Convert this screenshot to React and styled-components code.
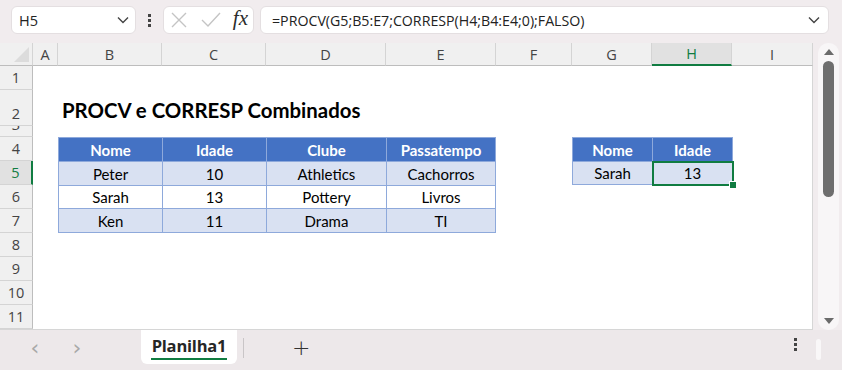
import React from 'react'
import styled, { createGlobalStyle } from 'styled-components'

const GlobalStyle = createGlobalStyle`
    html, body {
        margin: 0;
        padding: 0;
        background: #f1ecee;
    }
    * {
        box-sizing: border-box;
    }
`;

const COLS = ['A', 'B', 'C', 'D', 'E', 'F', 'G', 'H', 'I'];
const ROW_HEIGHTS = [24, 36, 11, 24, 24, 24, 24, 24, 24, 24, 24];

const people = [
    ['Peter', '10', 'Athletics', 'Cachorros'],
    ['Sarah', '13', 'Pottery', 'Livros'],
    ['Ken', '11', 'Drama', 'TI'],
];

const Chevron = () => (
    <svg width="12" height="8" viewBox="0 0 12 8">
        <polyline points="1,1.5 6,6.5 11,1.5" fill="none" stroke="#444" strokeWidth="1.4" />
    </svg>
);

export default function App() {
    return (
        <Window>
            <GlobalStyle />
            <Toolbar>
                <NameBox>
                    <span>H5</span>
                    <Chevron />
                </NameBox>
                <Dots>
                    <i /><i /><i />
                </Dots>
                <FxBox>
                    <svg width="20" height="20" viewBox="0 0 20 20">
                        <path d="M3 3 L17 17 M17 3 L3 17" stroke="#c4c4c4" strokeWidth="1.4" />
                    </svg>
                    <svg width="22" height="20" viewBox="0 0 22 20">
                        <polyline points="2,10 8,16 20,3" fill="none" stroke="#c4c4c4" strokeWidth="1.4" />
                    </svg>
                    <Fx>fx</Fx>
                </FxBox>
                <FormulaBox>
                    <span>=PROCV(G5;B5:E7;CORRESP(H4;B4:E4;0);FALSO)</span>
                    <Chevron />
                </FormulaBox>
            </Toolbar>

            <Middle>
                <Sheet>
                    <Corner />
                    {COLS.map((c) => (
                        <ColHead key={c} $active={c === 'H'}>{c}</ColHead>
                    ))}
                    {ROW_HEIGHTS.map((h, i) => (
                        <RowHead key={i} $row={i + 2} $active={i + 1 === 5}>
                            {i + 1}
                        </RowHead>
                    ))}

                    <Title>PROCV e CORRESP Combinados</Title>

                    <Table $col="3 / 7" $row="5 / 9" $cols="103px 103px 119px 108px">
                        {['Nome', 'Idade', 'Clube', 'Passatempo'].map((t) => (
                            <Cell key={t} $head>{t}</Cell>
                        ))}
                        {people.map((p, r) =>
                            p.map((v, c) => (
                                <Cell key={r + '-' + c} $band={r % 2 === 0}>{v}</Cell>
                            ))
                        )}
                    </Table>

                    <Table $col="8 / 10" $row="5 / 7" $cols="79px 79px">
                        <Cell $head>Nome</Cell>
                        <Cell $head>Idade</Cell>
                        <Cell $band>Sarah</Cell>
                        <Cell $band $selected>13</Cell>
                    </Table>
                </Sheet>

                <ScrollTrack>
                    <Arrow $up />
                    <Thumb />
                    <Spacer />
                    <Arrow />
                </ScrollTrack>
            </Middle>

            <TabBar>
                <NavArea>
                    <NavArrow>&#x2039;</NavArrow>
                    <NavArrow>&#x203A;</NavArrow>
                </NavArea>
                <SheetTab>Planilha1</SheetTab>
                <TabDivider />
                <AddSheet>+</AddSheet>
                <BarFill />
                <Dots>
                    <i /><i /><i />
                </Dots>
                <SplitPill />
            </TabBar>
        </Window>
    );
}

const Window = styled.div`
    width: 842px;
    height: 370px;
    overflow: hidden;
    background: #f1ecee;
    display: flex;
    flex-direction: column;
    font-family: "Open Sans", "Noto Sans", sans-serif;
`;

const Toolbar = styled.div`
    height: 43px;
    display: flex;
    align-items: flex-start;
    padding: 6px 13px 0 11px;
`;

const Box = styled.div`
    height: 28px;
    background: #ffffff;
    border: 1px solid #e4dfe1;
    border-radius: 6px;
    display: flex;
    align-items: center;
`;

const NameBox = styled(Box)`
    width: 125px;
    padding: 0 6px 0 7px;
    justify-content: space-between;
    font-size: 14.5px;
    color: #222;
`;

const Dots = styled.div`
    width: 27px;
    height: 28px;
    display: flex;
    flex-direction: column;
    align-items: center;
    justify-content: center;
    gap: 2px;
    i {
        display: block;
        width: 3px;
        height: 3px;
        background: #444;
    }
`;

const FxBox = styled(Box)`
    width: 91px;
    padding: 0 5px 0 5px;
    justify-content: space-between;
`;

const Fx = styled.span`
    font-family: "Liberation Serif", "DejaVu Serif", serif;
    font-style: italic;
    font-size: 21px;
    color: #2b2b2b;
    margin-top: -4px;
`;

const FormulaBox = styled(Box)`
    flex: 1;
    margin-left: 6px;
    padding: 0 8px 0 11px;
    justify-content: space-between;
    font-size: 14.2px;
    color: #222;
`;

const Middle = styled.div`
    display: flex;
    height: 287px;
`;

const Sheet = styled.div`
    width: 813px;
    background: #ffffff;
    display: grid;
    grid-template-columns: 33px 25px 104px 104px 120px 110px 76px 80px 80px 81px;
    grid-template-rows: 23px ${ROW_HEIGHTS.map((h) => h + 'px').join(' ')};
    border-right: 1px solid #d6d6d6;
    border-bottom: 1px solid #d6d6d6;
    font-family: "Lato", "Open Sans", sans-serif;
`;

const Corner = styled.div`
    background: #f0f0f0;
    border-right: 1px solid #d4d4d4;
    border-bottom: 1px solid #bdbdbd;
    position: relative;
    &::after {
        content: '';
        position: absolute;
        right: 3px;
        bottom: 3px;
        border-left: 15px solid transparent;
        border-bottom: 15px solid #dcdcdc;
    }
`;

const ColHead = styled.div`
    background: ${(p) => (p.$active ? '#e1e1e1' : '#f0f0f0')};
    color: ${(p) => (p.$active ? '#107c41' : '#444')};
    border-right: 1px solid #d4d4d4;
    border-bottom: ${(p) => (p.$active ? '2px solid #107c41' : '1px solid #bdbdbd')};
    font-family: "Open Sans", "Noto Sans", sans-serif;
    font-size: 14.5px;
    display: flex;
    align-items: center;
    justify-content: center;
`;

const RowHead = styled.div`
    grid-column: 1;
    grid-row: ${(p) => p.$row};
    background: ${(p) => (p.$active ? '#e1e1e1' : '#f0f0f0')};
    color: ${(p) => (p.$active ? '#107c41' : '#444')};
    border-bottom: 1px solid #d4d4d4;
    border-right: ${(p) => (p.$active ? '2px solid #107c41' : '1px solid #bdbdbd')};
    font-family: "Open Sans", "Noto Sans", sans-serif;
    font-size: 14.5px;
    line-height: 22px;
    display: flex;
    align-items: flex-end;
    justify-content: center;
    overflow: hidden;
`;

const Title = styled.div`
    grid-column: 3 / 8;
    grid-row: 3;
    align-self: end;
    padding: 0 0 4px 4px;
    font-size: 20.4px;
    font-weight: 700;
    color: #000;
    white-space: nowrap;
`;

const Table = styled.div`
    grid-column: ${(p) => p.$col};
    grid-row: ${(p) => p.$row};
    display: grid;
    grid-template-columns: ${(p) => p.$cols};
    grid-auto-rows: 1fr;
    gap: 1px;
    padding: 1px;
    background: #8ea9db;
    align-self: stretch;
    justify-self: start;
`;

const Cell = styled.div`
    position: relative;
    background: ${(p) => (p.$head ? '#4472c4' : p.$band ? '#d9e1f2' : '#ffffff')};
    color: ${(p) => (p.$head ? '#ffffff' : '#000000')};
    font-weight: ${(p) => (p.$head ? 700 : 400)};
    font-size: 15px;
    display: flex;
    align-items: center;
    justify-content: center;
    padding-top: 1px;
    ${(p) =>
        p.$selected &&
        `
        &::after {
            content: '';
            position: absolute;
            inset: -1px -2px -2px -1px;
            border: 2px solid #107c41;
        }
        &::before {
            content: '';
            position: absolute;
            right: -5px;
            bottom: -5px;
            width: 6px;
            height: 6px;
            background: #107c41;
            border: 1px solid #ffffff;
            z-index: 1;
        }
    `}
`;

const ScrollTrack = styled.div`
    margin: 0 2px 0 5px;
    width: 21px;
    background: #f8f6f7;
    border-radius: 10px;
    display: flex;
    flex-direction: column;
    align-items: center;
    padding: 6px 0 6px;
`;

const Arrow = styled.div`
    width: 0;
    height: 0;
    border-left: 5px solid transparent;
    border-right: 5px solid transparent;
    ${(p) =>
        p.$up
            ? 'border-bottom: 6px solid #6b6b6b;'
            : 'border-top: 6px solid #6b6b6b;'}
`;

const Thumb = styled.div`
    width: 11px;
    height: 136px;
    margin-top: 6px;
    border-radius: 6px;
    background: #6e6e6e;
`;

const Spacer = styled.div`
    flex: 1;
`;

const TabBar = styled.div`
    flex: 1;
    display: flex;
    align-items: flex-start;
    background: #ede8ea;
`;

const NavArea = styled.div`
    width: 141px;
    height: 40px;
    display: flex;
    padding-left: 28px;
    gap: 28px;
    align-items: center;
`;

const NavArrow = styled.span`
    font-family: "DejaVu Sans", sans-serif;
    font-size: 22px;
    color: #a8a8a8;
    width: 14px;
    text-align: center;
    line-height: 1;
    margin-top: -4px;
`;

const SheetTab = styled.div`
    width: 96px;
    height: 34px;
    background: #ffffff;
    border-radius: 0 0 6px 6px;
    display: flex;
    justify-content: center;
    padding-top: 4px;
    font-size: 16.5px;
    font-weight: 700;
    color: #262626;
    position: relative;
    letter-spacing: -0.2px;
    &::after {
        content: '';
        position: absolute;
        left: 10px;
        right: 10px;
        bottom: 4px;
        height: 2px;
        background: #107c41;
    }
`;

const TabDivider = styled.div`
    width: 1px;
    height: 20px;
    margin: 8px 0 0 6px;
    background: #c9c5c7;
`;

const AddSheet = styled.div`
    margin: 4px 0 0 48px;
    font-family: "DejaVu Sans", sans-serif;
    font-size: 22px;
    font-weight: 300;
    line-height: 28px;
    color: #333;
`;

const BarFill = styled.div`
    flex: 1;
`;

const SplitPill = styled.div`
    width: 5px;
    height: 21px;
    margin: 9px 21px 0 7px;
    border-radius: 3px;
    background: #f9f7f8;
`;
